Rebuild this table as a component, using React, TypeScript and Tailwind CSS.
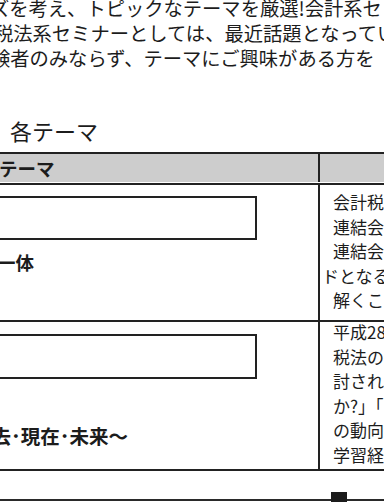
import React from "react";

const intro = [
  { text: "ズを考え、トピックなテーマを厳選!会計系セミ", indent: "-ml-[10px]" },
  { text: "税法系セミナーとしては、最近話題となっている", indent: "-ml-[6px]" },
  { text: "験者のみならず、テーマにご興味がある方を", indent: "-ml-[9px]" },
];

const rows = [
  {
    title: "会計と税務の一体",
    titleClass: "pl-[6px] text-[18.5px] mt-[13px]",
    boxClass: "mt-[11px] h-[44px]",
    height: "h-[137px]",
    notes: ["会計税務の", "連結会計と", "連結会計の", "ドとなる考", "解くことで"],
    notesClass: "pt-[5px]",
  },
  {
    title: "過去･現在･未来～",
    titleClass: "pl-[92px] text-[19.5px] mt-[47px]",
    boxClass: "mt-[12px] h-[45px]",
    height: "h-[147px]",
    notes: ["平成28年", "税法の改正", "討されてき", "か?」「", "の動向を", "学習経験"],
    notesClass: "-mt-[2px]",
  },
];

export default function App() {
  return (
    <div className="w-[384px] h-[502px] overflow-hidden bg-white text-[#1c1c1c] font-['Noto_Sans_CJK_JP',sans-serif]">
      {/* lead paragraph */}
      <div className="-mt-[4px] text-[19.3px] leading-[25px] whitespace-nowrap">
        {intro.map((line) => (
          <div key={line.text} className={line.indent}>
            {line.text}
          </div>
        ))}
      </div>

      <h2 className="mt-[48px] pl-[10px] text-[22px] leading-none font-normal">各テーマ</h2>

      {/* theme table */}
      <div className="mt-[11px] -ml-[120px] w-[600px] border-y-2 border-[#222]">
        <div className="grid grid-cols-[440px_1fr] border-b-2 border-[#222] pb-px bg-white">
          <div className="h-[28px] bg-[#cdcdcd] border-r-2 border-[#222] flex items-center pl-[45px] text-[18.5px] font-bold leading-none whitespace-nowrap">
            セミナーテーマ
          </div>
          <div className="h-[28px] bg-[#cdcdcd]"></div>
        </div>

        {rows.map((row, i) => (
          <div
            key={row.title}
            className={`grid grid-cols-[440px_1fr] ${row.height} ${i === 0 ? "border-b-2 border-[#222]" : ""}`}
          >
            <div className="border-r-2 border-[#222] overflow-hidden">
              <div className={`ml-[20px] w-[357px] border-2 border-[#222] bg-white ${row.boxClass}`}></div>
              <div className={`font-bold leading-none whitespace-nowrap ${row.titleClass}`}>{row.title}</div>
            </div>
            <div className={`pl-[13px] text-[17px] leading-[24.5px] whitespace-nowrap overflow-hidden ${row.notesClass}`}>
              {row.notes.map((n) => (
                <div key={n} className={n === "ドとなる考" ? "-ml-[11px]" : ""}>
                  {n}
                </div>
              ))}
            </div>
          </div>
        ))}
      </div>

      {/* section rule with marker */}
      <div className="mt-[21px] flex items-start">
        <div className="w-[331px] mt-[7px] h-[2px] bg-[#2a2a2a]"></div>
        <div className="w-[16px] h-[12px] bg-[#1c1c1c]"></div>
        <div className="flex-1 mt-[7px] h-[2px] bg-[#2a2a2a]"></div>
      </div>
    </div>
  );
}
